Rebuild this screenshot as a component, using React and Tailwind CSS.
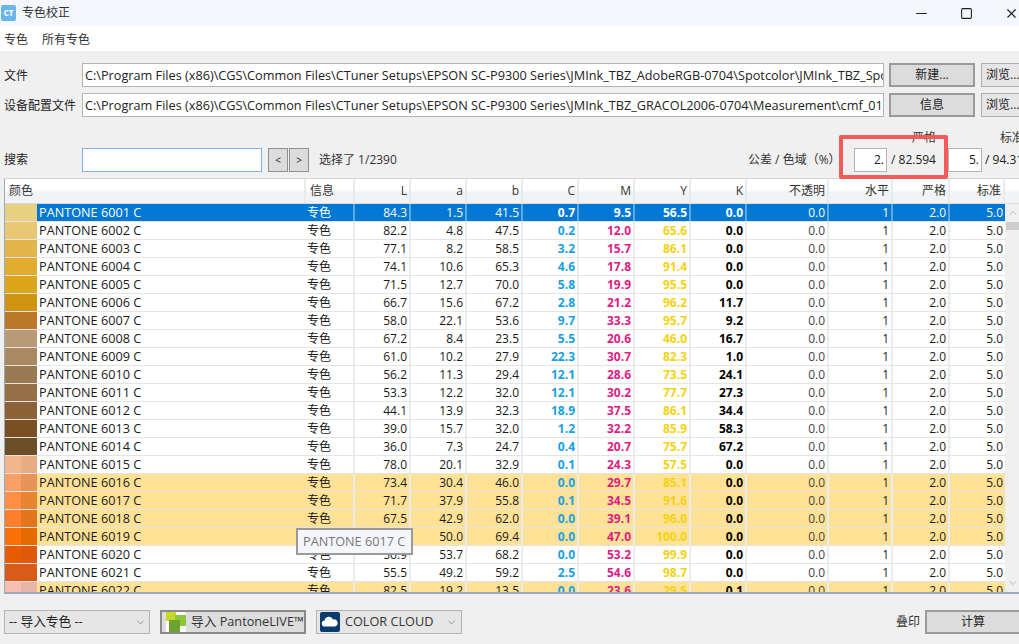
import React from "react";
import { ChevronDown, ChevronUp, Minus, Square, X } from "lucide-react";

const rows = [
  ["6001","84.3","1.5","41.5","0.7","9.5","56.5","0.0","#e8d083","#e8d083",0,1],
  ["6002","82.2","4.8","47.5","0.2","12.0","65.6","0.0","#e9c873","#e9c873",0,0],
  ["6003","77.1","8.2","58.5","3.2","15.7","86.1","0.0","#e2b54a","#e2b54a",0,0],
  ["6004","74.1","10.6","65.3","4.6","17.8","91.4","0.0","#e0ad2f","#e0ad2f",0,0],
  ["6005","71.5","12.7","70.0","5.8","19.9","95.5","0.0","#dba61a","#dba61a",0,0],
  ["6006","66.7","15.6","67.2","2.8","21.2","96.2","11.7","#cf9512","#cf9512",0,0],
  ["6007","58.0","22.1","53.6","9.7","33.3","95.7","9.2","#bb7829","#bb7829",0,0],
  ["6008","67.2","8.4","23.5","5.5","20.6","46.0","16.7","#b89a78","#b89a78",0,0],
  ["6009","61.0","10.2","27.9","22.3","30.7","82.3","1.0","#a98862","#a98862",0,0],
  ["6010","56.2","11.3","29.4","12.1","28.6","73.5","24.1","#9a7a52","#9a7a52",0,0],
  ["6011","53.3","12.2","32.0","12.1","30.2","77.7","27.3","#966f47","#966f47",0,0],
  ["6012","44.1","13.9","32.3","18.9","37.5","86.1","34.4","#8c6337","#8c6337",0,0],
  ["6013","39.0","15.7","32.0","1.2","32.2","85.9","58.3","#7a4f24","#7a4f24",0,0],
  ["6014","36.0","7.3","24.7","0.4","20.7","75.7","67.2","#6b4e28","#6b4e28",0,0],
  ["6015","78.0","20.1","32.9","0.1","24.3","57.5","0.0","#f2b48a","#e8ab82",0,0],
  ["6016","73.4","30.4","46.0","0.0","29.7","85.1","0.0","#fa9f66","#e89458",1,0],
  ["6017","71.7","37.9","55.8","0.1","34.5","91.6","0.0","#ff8f45","#e78533",1,0],
  ["6018","67.5","42.9","62.0","0.0","39.1","96.0","0.0","#ff7f2c","#e4751f",1,0],
  ["6019","63.1","50.0","69.4","0.0","47.0","100.0","0.0","#f97008","#e56a00",1,0],
  ["6020","56.9","53.7","68.2","0.0","53.2","99.9","0.0","#e85c00","#e0590a",0,0],
  ["6021","55.5","49.2","59.2","2.5","54.6","98.7","0.0","#da5a17","#da5a17",0,0],
  ["6022","82.5","19.2","13.5","0.0","23.6","29.5","0.1","#f6bfb2","#e8b5aa",1,0],
];

const FONT = "font-['Open_Sans','Noto_Sans_CJK_SC',sans-serif]";

function HeadCell({ w, children, left }) {
  return (
    <div className={`${w} shrink-0 h-full border-r-2 border-[#e9eaec] flex items-center ${left ? "pl-[4px]" : "justify-end pr-[2px]"}`}>
      {children}
    </div>
  );
}

function Cell({ w, sel, className = "", children }) {
  return (
    <div className={`${w} shrink-0 h-full border-r-2 ${sel ? "border-[#5fa9e3]" : "border-[#ececec]"} flex items-center justify-end pr-[2px] ${className}`}>
      {children}
    </div>
  );
}

function Row({ r }) {
  const [id, L, a, b, C, M, Y, K, c1, c2, warn, sel] = r;
  const bg = sel ? "bg-[#0078d4] text-white" : warn ? "bg-[#ffe295] text-[#1a1a1a]" : "bg-white text-[#1a1a1a]";
  return (
    <div className="flex h-[18px] shrink-0 border-b border-[#e4e4e4] leading-none">
      <div className="w-[16px] h-full shrink-0" style={{ backgroundColor: c1 }} />
      <div className="w-[16px] h-full shrink-0" style={{ backgroundColor: c2 }} />
      <div className={`flex h-full ${bg}`}>
        <div className="w-[269px] shrink-0 h-full border-r-2 border-transparent flex items-center pl-[2px] text-[12.7px]">PANTONE {id} C</div>
        <div className={`w-[49px] shrink-0 h-full border-r-2 ${sel ? "border-[#5fa9e3]" : "border-[#ececec]"} flex items-center pl-[1px]`}>专色</div>
        <Cell w="w-[56px]" sel={sel}>{L}</Cell>
        <Cell w="w-[56px]" sel={sel}>{a}</Cell>
        <Cell w="w-[56px]" sel={sel}>{b}</Cell>
        <Cell w="w-[56px]" sel={sel} className={`font-bold ${sel ? "" : "text-[#17a0e3]"}`}>{C}</Cell>
        <Cell w="w-[56px]" sel={sel} className={`font-bold ${sel ? "" : "text-[#e01c84]"}`}>{M}</Cell>
        <Cell w="w-[56px]" sel={sel} className={`font-bold ${sel ? "" : "text-[#f3d213]"}`}>{Y}</Cell>
        <Cell w="w-[56px]" sel={sel} className={`font-bold ${sel ? "" : "text-black"}`}>{K}</Cell>
        <Cell w="w-[82px]" sel={sel} className={sel ? "" : "text-[#444]"}>0.0</Cell>
        <Cell w="w-[64px]" sel={sel}>1</Cell>
        <Cell w="w-[57px]" sel={sel}>2.0</Cell>
        <div className="w-[55px] shrink-0 h-full flex items-center justify-end pr-[2px]">5.0</div>
      </div>
    </div>
  );
}

function PathField({ children }) {
  return (
    <div className="w-[802px] h-[24px] shrink-0 bg-white border border-[#b4b4b4] flex items-center pt-[1px] pl-[2px] overflow-hidden whitespace-nowrap text-[#222] text-[12.7px]">
      {children}
    </div>
  );
}

function FileRow({ label, path, action, className = "" }) {
  return (
    <div className={`flex items-center h-[24px] ${className}`}>
      <div className="w-[78px] shrink-0 pt-[1px] text-[#222] whitespace-nowrap">{label}</div>
      <PathField>{path}</PathField>
      <button className="ml-[5px] w-[86px] h-[24px] shrink-0 bg-[#dcdcdc] border-2 border-[#9a9a9a] text-[#222] flex items-center justify-center">{action}</button>
      <button className="ml-[6px] w-[60px] h-[24px] shrink-0 bg-[#e6e6e6] border border-[#adadad] text-[#222] flex items-center pl-[4px] whitespace-nowrap">浏览...</button>
    </div>
  );
}

export default function App() {
  return (
    <div className={`relative w-[1019px] h-[644px] overflow-hidden bg-[#f0f0f0] text-[12px] text-[#222] flex flex-col ${FONT}`}>
      <div className="h-[26px] shrink-0 bg-[#f3f6fb] flex items-center">
        <div className="ml-[1px] w-[15px] h-[16px] rounded-[2px] bg-[#6ab5e9] text-white text-[8px] font-bold flex items-center justify-center leading-none">CT</div>
        <div className="ml-[6px] text-[#333]">专色校正</div>
        <div className="ml-auto flex items-center shrink-0">
          <Minus size={17} strokeWidth={1.5} className="text-[#222] mr-[30px]" />
          <Square size={13} strokeWidth={2} className="text-[#222] mr-[31px]" />
          <X size={15} strokeWidth={1.7} className="text-[#222]" />
        </div>
      </div>
      <div className="h-[25px] shrink-0 bg-white flex items-center pl-[4px] pt-[2px] gap-[14px] text-[#333]">
        <span>专色</span>
        <span>所有专色</span>
      </div>

      <div className="pl-[4px] flex flex-col flex-1 min-h-0">
        <FileRow className="mt-[12px]" label="文件" action="新建..." path="C:\Program Files (x86)\CGS\Common Files\CTuner Setups\EPSON SC-P9300 Series\JMInk_TBZ_AdobeRGB-0704\Spotcolor\JMInk_TBZ_Spotcolor.txt" />
        <FileRow className="mt-[6px]" label="设备配置文件" action="信息" path="C:\Program Files (x86)\CGS\Common Files\CTuner Setups\EPSON SC-P9300 Series\JMInk_TBZ_GRACOL2006-0704\Measurement\cmf_01.txt" />

        <div className="mt-[13px] h-[42px] flex items-end shrink-0">
          <div className="h-[24px] w-[78px] shrink-0 flex items-center">搜索</div>
          <input readOnly className="w-[180px] h-[24px] shrink-0 bg-white border border-[#7eb4ea] outline-none" />
          <button className="ml-[6px] w-[20px] h-[24px] shrink-0 bg-[#dcdcdc] border border-[#8f8f8f] flex items-center justify-center text-[10px]">&lt;</button>
          <button className="ml-[1px] w-[20px] h-[24px] shrink-0 bg-[#dcdcdc] border border-[#8f8f8f] flex items-center justify-center text-[10px]">&gt;</button>
          <div className="ml-[10px] h-[24px] flex items-center w-[429px] shrink-0 text-[#333]">选择了 1/2390</div>
          <div className="h-[24px] flex items-center w-[106px] shrink-0 text-[#333] whitespace-nowrap">公差 / 色域（%）</div>
          <div className="flex flex-col items-end w-[94px] shrink-0">
            <div className="h-[18px] pr-[12px] text-[#333] leading-[16px] whitespace-nowrap">严格</div>
            <div className="h-[24px] flex items-center self-start">
              <div className="w-[33px] h-[24px] bg-white border border-[#b4b4b4] flex items-center justify-end pr-[2px]">2.</div>
              <span className="ml-[4px] whitespace-nowrap">/ 82.594</span>
            </div>
          </div>
          <div className="flex flex-col w-[80px] shrink-0">
            <div className="h-[18px] pl-[52px] text-[#333] leading-[16px] whitespace-nowrap">标准</div>
            <div className="h-[24px] flex items-center">
              <div className="w-[34px] h-[24px] shrink-0 bg-white border border-[#b4b4b4] flex items-center justify-end pr-[2px]">5.</div>
              <span className="ml-[3px] whitespace-nowrap">/ 94.31</span>
            </div>
          </div>
        </div>

        <div className="mt-[6px] h-[416px] shrink-0 border-l border-b-2 border-[#9aa9bb] border-t border-t-[#d5d5d5] flex flex-col overflow-hidden">
          <div className="h-[25px] shrink-0 flex bg-[linear-gradient(#ffffff_45%,#f1f3f6_55%)] border-b border-[#dcdcdc] text-[#333]">
            <HeadCell w="w-[301px]" left>颜色</HeadCell>
            <HeadCell w="w-[49px]" left>信息</HeadCell>
            <HeadCell w="w-[56px]">L</HeadCell>
            <HeadCell w="w-[56px]">a</HeadCell>
            <HeadCell w="w-[56px]">b</HeadCell>
            <HeadCell w="w-[56px]">C</HeadCell>
            <HeadCell w="w-[56px]">M</HeadCell>
            <HeadCell w="w-[56px]">Y</HeadCell>
            <HeadCell w="w-[56px]">K</HeadCell>
            <HeadCell w="w-[82px]">不透明</HeadCell>
            <HeadCell w="w-[64px]">水平</HeadCell>
            <HeadCell w="w-[57px]">严格</HeadCell>
            <HeadCell w="w-[55px]">标准</HeadCell>
          </div>
          <div className="flex flex-1 min-h-0">
            <div className="w-[1001px] shrink-0 flex flex-col overflow-hidden">
              {rows.map((r) => <Row key={r[0]} r={r} />)}
            </div>
            <div className="w-[13px] shrink-0 bg-[#f0f0f0] flex flex-col items-center">
              <ChevronUp size={12} strokeWidth={1.2} className="mt-[3px] text-[#9a9a9a]" />
              <div className="mt-[3px] w-full h-[8px] bg-[#cdcdcd]" />
              <ChevronDown size={12} strokeWidth={1.2} className="mt-auto mb-[3px] text-[#9a9a9a]" />
            </div>
          </div>
        </div>

        <div className="mt-[16px] h-[24px] flex items-center shrink-0 text-[12.7px]">
          <div className="w-[146px] h-[24px] shrink-0 bg-[#e6e6e6] border border-[#b4b4b4] flex items-center pl-[4px] pr-[3px] justify-between">
            <span>-- 导入专色 --</span>
            <ChevronDown size={11} strokeWidth={1.3} className="text-[#666]" />
          </div>
          <button className="ml-[10px] w-[146px] h-[24px] shrink-0 bg-[#dcdcdc] border-2 border-[#8a8a8a] flex items-center pl-[4px] whitespace-nowrap">
            <svg width="20" height="20" viewBox="0 0 20 20" className="shrink-0">
              <rect width="20" height="20" fill="#ffffff" />
              <rect x="0" y="0" width="10" height="9" fill="#c6d92b" />
              <rect x="9" y="3" width="11" height="11" fill="#8cc63f" />
              <rect x="3" y="8" width="11" height="12" fill="#6ca331" />
            </svg>
            <span className="ml-[5px] text-[#333]">导入 PantoneLIVE™</span>
          </button>
          <div className="ml-[10px] w-[146px] h-[24px] shrink-0 bg-[#e6e6e6] border border-[#b4b4b4] flex items-center pl-[3px] pr-[4px]">
            <svg width="20" height="20" viewBox="0 0 20 20" className="shrink-0">
              <rect width="20" height="20" rx="2" fill="#0b3a6f" />
              <path d="M5 14.5a3 3 0 0 1-.4-6 4.4 4.4 0 0 1 8.4-1 3.6 3.6 0 0 1 2 7z" fill="#ffffff" />
            </svg>
            <span className="ml-[5px] text-[#333] whitespace-nowrap">COLOR CLOUD</span>
            <ChevronDown size={11} strokeWidth={1.3} className="ml-auto text-[#666]" />
          </div>
          <div className="ml-[434px] w-[29px] shrink-0 text-[12px] text-[#333] whitespace-nowrap">叠印</div>
          <button className="w-[110px] h-[24px] shrink-0 bg-[#dcdcdc] border-2 border-[#9a9a9a] flex items-center justify-center pr-[14px] text-[12px] text-[#222]">计算</button>
        </div>
      </div>

      <div className="absolute left-[296px] top-[528px] w-[117px] h-[27px] bg-[#f5f6fb] border-2 border-[#9a9a9a] flex items-center pl-[5px] text-[12.7px] text-[#777] whitespace-nowrap">PANTONE 6017 C</div>
      <div className="absolute left-[839px] top-[135px] w-[109px] h-[44px] border-[4px] border-[#f55a5a] rounded-[2px] pointer-events-none" />
    </div>
  );
}
